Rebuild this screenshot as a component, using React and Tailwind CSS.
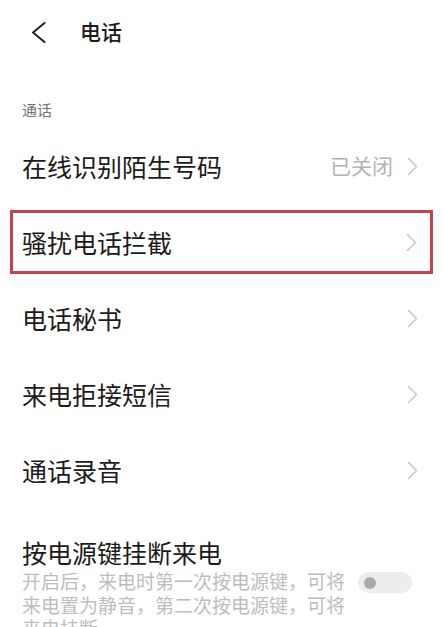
const font = { fontFamily: '"Noto Sans CJK SC", "Noto Sans", sans-serif' };

const Chevron = () => (
    <svg width="11" height="19" viewBox="0 0 11 19" fill="none" className="shrink-0">
        <path d="M1.5 1.5 L9.5 9.5 L1.5 17.5" stroke="#c9c9c9" strokeWidth="1.6" strokeLinecap="round" strokeLinejoin="round" />
    </svg>
);

// Linha simples de configuração
const Row = ({ label, value }) => (
    <div className="h-[76px] flex items-center justify-between pl-[22px] pr-[25px]">
        <span className="text-[25px] leading-[32px] text-[#1b1b1b]">{label}</span>
        <div className="flex items-center gap-[14px]">
            {value && <span className="text-[21px] text-[#b4b4b4]">{value}</span>}
            <Chevron />
        </div>
    </div>
);

export default function App() {
    return (
        <div className="w-[443px] h-[627px] overflow-hidden bg-white" style={font}>
            {/* Cabeçalho */}
            <div className="h-[64px] flex items-center pl-[31px]">
                <svg width="15" height="21" viewBox="0 0 15 21" fill="none">
                    <path d="M13.5 1 L2 10.5 L13.5 20" stroke="#222" strokeWidth="2" strokeLinecap="round" strokeLinejoin="round" />
                </svg>
                <span className="ml-[34px] text-[21px] font-medium text-[#1b1b1b]">电话</span>
            </div>

            <div className="mt-[36px] h-[20px] pl-[22px] flex items-center text-[15px] text-[#737373]">通话</div>

            <div className="mt-[8px]">
                <Row label="在线识别陌生号码" value="已关闭" />
                <div className="h-[76px] py-[6px]">
                    <div className="h-[64px] mx-[10px] border-[3px] border-[#c4444a] flex items-center justify-between pl-[9px] pr-[13px]">
                        <span className="text-[25px] leading-[32px] text-[#1b1b1b]">骚扰电话拦截</span>
                        <Chevron />
                    </div>
                </div>
                <Row label="电话秘书" />
                <Row label="来电拒接短信" />
                <Row label="通话录音" />
            </div>

            {/* Botão de energia */}
            <div className="pt-[29px] pl-[22px]">
                <div className="text-[25px] leading-[30px] text-[#1b1b1b]">按电源键挂断来电</div>
                <div className="mt-[2px] flex items-start">
                    <p className="w-[326px] text-[19px] leading-[23.5px] text-[#bdbdbd]">
                        开启后，来电时第一次按电源键，可将来电置为静音，第二次按电源键，可将来电挂断。
                    </p>
                    <div className="ml-[10px] mt-[3px] w-[54px] h-[21px] rounded-full bg-[#ededed] flex items-center pl-[6px]">
                        <div className="w-[12px] h-[12px] rounded-full bg-[#a9a9a9]" />
                    </div>
                </div>
            </div>
        </div>
    );
}
